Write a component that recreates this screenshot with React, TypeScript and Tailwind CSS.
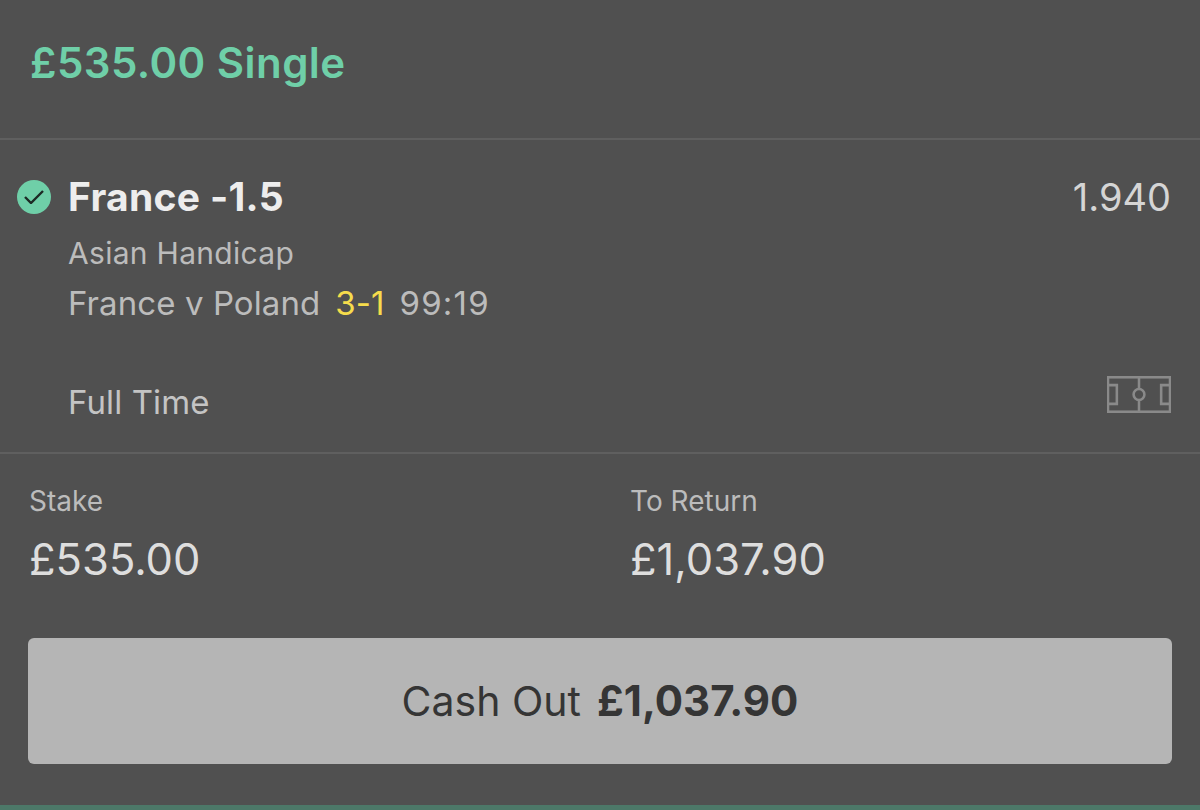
export default function App() {
  return (
    <div className="flex h-[810px] w-[1200px] flex-col overflow-hidden bg-[#505050] font-['Inter',sans-serif]">
      <header className="flex h-[140px] items-start border-b-2 border-[#5f5f5f] pl-[30px] pt-[40px]">
        <h1 className="text-[42px] font-semibold leading-[46px] tracking-[0.45px] text-[#6fcfa8]">£535.00 Single</h1>
      </header>
      <section className="flex h-[314px] flex-col border-b-2 border-[#5f5f5f] pl-[17px] pr-[29px]">
        <div className="mt-[35px] flex items-center justify-between">
          <div className="flex items-center gap-[17px]">
            <span className="flex h-[34px] w-[34px] items-center justify-center rounded-full bg-[#6fcfa8]">
              <svg width="20" height="14" viewBox="0 0 20 14" fill="none" stroke="#1d2a25" strokeWidth="2.4">
                <path d="M1 7l6 6L19 1" />
              </svg>
            </span>
            <span className="text-[39px] font-bold leading-[44px] tracking-[0.3px] text-[#ededed]">France -1.5</span>
          </div>
          <span className="text-[38px] leading-[44px] text-[#d5d5d5]">1.940</span>
        </div>
        <div className="mt-[16px] pl-[51px] text-[30px] leading-[36px] tracking-[0.3px] text-[#bcbcbc]">Asian Handicap</div>
        <div className="mt-[13px] flex gap-[15px] pl-[51px] text-[33px] leading-[38px] tracking-[0.08px] text-[#bcbcbc]">
          <span>France v Poland</span>
          <span className="text-[#f6dc4c]">3-1</span>
          <span className="tracking-[1.2px]">99:19</span>
        </div>
        <div className="mt-[54px] flex items-end justify-between pl-[51px]">
          <span className="text-[33px] leading-[38px] tracking-[0.1px] text-[#c4c4c4]">Full Time</span>
          <svg className="mb-[8px]" width="64" height="37" viewBox="0 0 65 37" fill="none" stroke="#8a8a8a" strokeWidth="2.6">
            <rect x="1" y="1" width="63" height="35" />
            <path d="M32.5 1v35" />
            <circle cx="32.5" cy="18.5" r="5.5" fill="#505050" />
            <path d="M1 9h9v19H1M64 9h-9v19h9" />
          </svg>
        </div>
      </section>
      <section className="grid grid-cols-[601px_1fr] pl-[29px] pt-[31px]">
        <div>
          <div className="text-[28px] leading-[32px] text-[#bcbcbc]">Stake</div>
          <div className="mt-[17px] text-[43.5px] leading-[50px] text-[#dedede]">£535.00</div>
        </div>
        <div>
          <div className="text-[28px] leading-[32px] text-[#bcbcbc]">To Return</div>
          <div className="mt-[17px] text-[43.5px] leading-[50px] text-[#dedede]">£1,037.90</div>
        </div>
      </section>
      <div className="mx-[28px] mt-[54px]">
        <button className="h-[126px] w-[1144px] rounded-[6px] bg-[#b5b5b5] text-center text-[41px] text-[#353535]">
          <span>Cash Out</span>
          <span className="ml-[16px] text-[42px] font-bold">£1,037.90</span>
        </button>
      </div>
      <div className="mt-auto h-[5px] bg-[#4c7868]" />
    </div>
  );
}
